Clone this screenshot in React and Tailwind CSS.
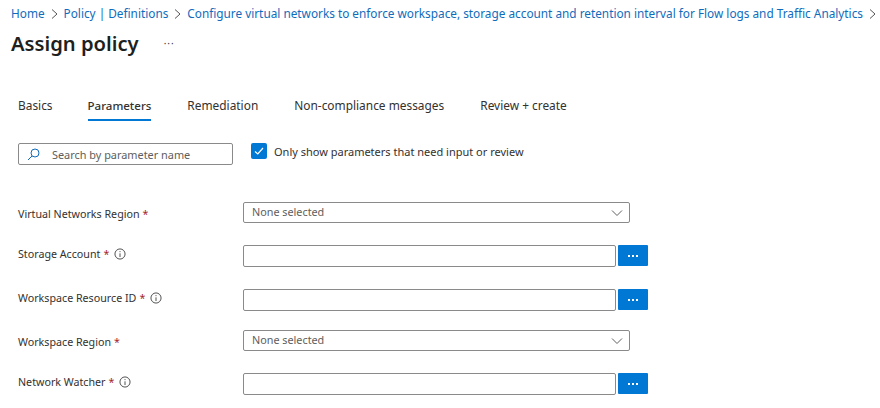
import React from "react";

const Chevron = () => (
  <svg width="12" height="12" viewBox="0 0 12 12" fill="none" stroke="#5f5f5f" strokeWidth="1" className="shrink-0">
    <path d="M1 3.5 L6 8.5 L11 3.5" />
  </svg>
);

const Info = () => (
  <svg width="12" height="12" viewBox="0 0 13 13" fill="none" stroke="#444" strokeWidth="1" className="shrink-0">
    <circle cx="6.5" cy="6.5" r="5.5" />
    <path d="M6.5 5.8 V9.8 M6.5 3.4 V4.5" />
  </svg>
);

const Crumb = ({ children }) => <span className="text-[#0f6cbd] whitespace-nowrap">{children}</span>;

const Sep = () => (
  <svg width="7" height="10" viewBox="0 0 7 10" fill="none" stroke="#555" strokeWidth="1" className="mx-[6px] shrink-0">
    <path d="M1 0.5 L6 5 L1 9.5" />
  </svg>
);

const Row = ({ label, info, type, className }) => (
  <div className={"flex items-center pl-[18px] " + className}>
    <div className={"w-[225px] flex items-center text-[#323130] whitespace-nowrap text-[10.7px] " + (type === "select" ? "pt-[4px]" : "pb-[4px]")}>
      <span>{label}</span>
      <span className="text-[#a4262c] ml-[3px]">*</span>
      {info && <span className="ml-[5px] flex"><Info /></span>}
    </div>
    {type === "select" ? (
      <div className="w-[387px] h-[21px] border border-[#8a8a8a] rounded-[2px] flex items-center justify-between pl-2 pr-[6px] text-[#605e5c] text-[10.8px]">
        <span>None selected</span>
        <Chevron />
      </div>
    ) : (
      <div className="flex items-start gap-[2px]">
        <div className="w-[373px] h-[22px] border border-[#8a8a8a] rounded-[2px] bg-white" />
        <div className="w-[30px] h-[21px] bg-[#0078d4] rounded-[1px] flex items-center justify-center gap-[2px]">
          <span className="w-[2px] h-[2px] bg-white" />
          <span className="w-[2px] h-[2px] bg-white" />
          <span className="w-[2px] h-[2px] bg-white" />
        </div>
      </div>
    )}
  </div>
);

export default function App() {
  return (
    <div className="w-[880px] h-[408px] overflow-hidden bg-white text-[12px] font-['Noto_Sans',sans-serif]">
      <div className="flex items-center pl-[11px] pt-[6px] h-[22px] whitespace-nowrap text-[11.8px]">
        <Crumb>Home</Crumb>
        <Sep />
        <Crumb>Policy | Definitions</Crumb>
        <Sep />
        <Crumb>Configure virtual networks to enforce workspace, storage account and retention interval for Flow logs and Traffic Analytics</Crumb>
        <Sep />
      </div>
      <div className="flex items-center pl-[11px] mt-[7px] h-[28px]">
        <h1 className="text-[20.2px] font-semibold text-[#201f1e] leading-none">Assign policy</h1>
        <span className="ml-[25px] text-[#444] text-[10px] tracking-[1px] leading-none">···</span>
      </div>
      <div className="flex pl-[18px] mt-[35px] h-[29px] text-[#323130] text-[11.9px]">
        <span className="mr-[35px] pt-[5px]">Basics</span>
        <span className="mr-[36px] pt-[5px] h-[29px] border-b-2 border-[#0078d4] font-medium text-[11.5px]">Parameters</span>
        <span className="mr-[36px] pt-[5px]">Remediation</span>
        <span className="mr-[36px] pt-[5px]">Non-compliance messages</span>
        <span className="pt-[5px]">Review + create</span>
      </div>
      <div className="flex items-start pl-[18px] mt-[22px]">
        <div className="w-[215px] h-[22px] border border-[#8a8a8a] rounded-[2px] flex items-center pl-2">
          <svg width="13" height="13" viewBox="0 0 13 13" fill="none" stroke="#0f6cbd" strokeWidth="1" className="shrink-0">
            <circle cx="8" cy="5" r="4" />
            <path d="M5 8 L1 12" />
          </svg>
          <span className="ml-[12px] pt-[2px] text-[#605e5c] text-[10.9px]">Search by parameter name</span>
        </div>
        <div className="ml-[18px] w-[16px] h-[16px] bg-[#0078d4] rounded-[2px] flex items-center justify-center">
          <svg width="10" height="10" viewBox="0 0 10 10" fill="none" stroke="#fff" strokeWidth="1.2">
            <path d="M1 5.5 L3.8 8 L9 2" />
          </svg>
        </div>
        <span className="ml-[7px] text-[#323130] leading-[18px] text-[11px]">Only show parameters that need input or review</span>
      </div>
      <Row label="Virtual Networks Region" type="select" className="mt-[37px]" />
      <Row label="Storage Account" info type="input" className="mt-[22px]" />
      <Row label="Workspace Resource ID" info type="input" className="mt-[22px]" />
      <Row label="Workspace Region" type="select" className="mt-[19px]" />
      <Row label="Network Watcher" info type="input" className="mt-[22px]" />
    </div>
  );
}
